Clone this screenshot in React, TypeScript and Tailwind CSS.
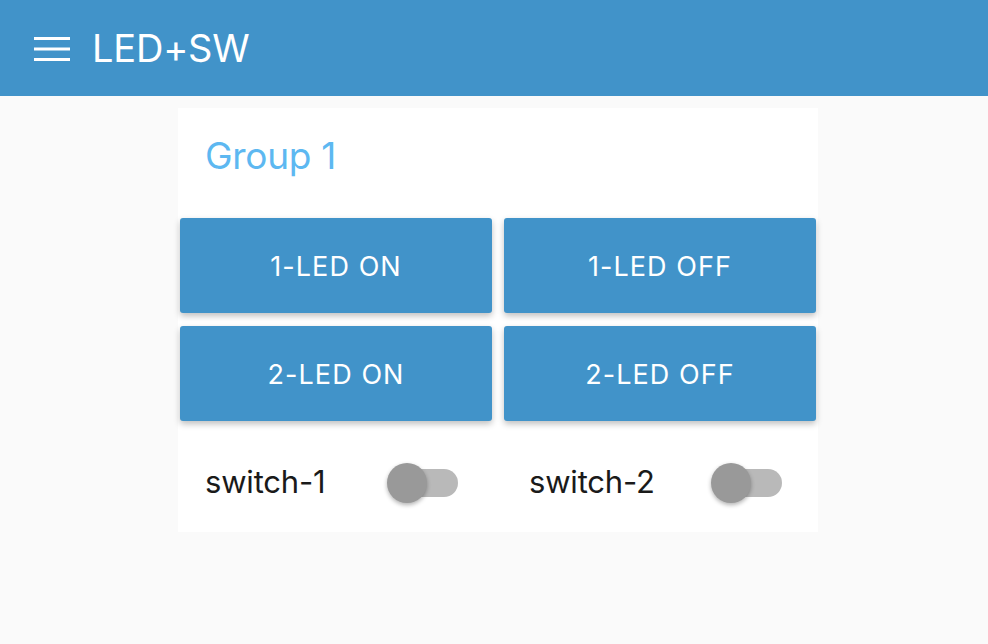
import React, { useState } from 'react'

// LED+SW control panel: header bar, one group card with LED buttons and switches

const buttons = ['1-LED ON', '1-LED OFF', '2-LED ON', '2-LED OFF']

const Toggle: React.FC<{ on: boolean; onClick: () => void }> = ({ on, onClick }) => (
  <button onClick={onClick} className="relative w-[71px] h-[40px] flex items-center justify-end">
    <span
      className={`block w-[68px] h-[28px] rounded-full ${on ? 'bg-[#9fcbe8]' : 'bg-[#b9b9b9]'}`}
    />
    <span
      className={`absolute top-0 w-[40px] h-[40px] rounded-full shadow-[0_2px_4px_rgba(0,0,0,0.3)] ${
        on ? 'left-[31px] bg-[#4192c9]' : 'left-0 bg-[#999999]'
      }`}
    />
  </button>
)

export default function App() {
  const [sw, setSw] = useState([false, false])

  return (
    <div className="min-h-[644px] bg-[#fafafa] font-['Inter',sans-serif]">
      <header className="h-[96px] bg-[#4193c9] flex items-center pl-[34px] gap-[22px] text-white">
        <svg width="36" height="24" viewBox="0 0 36 24" className="mt-[2px]">
          <rect x="0" y="0" width="36" height="3" fill="#fff" />
          <rect x="0" y="10.5" width="36" height="3" fill="#fff" />
          <rect x="0" y="21" width="36" height="3" fill="#fff" />
        </svg>
        <h1 className="text-[38px] font-normal tracking-[-0.2px]">LED+SW</h1>
      </header>

      <main className="w-[640px] ml-[178px] mt-[12px] bg-white">
        <div className="h-[108px] pl-[27px] flex items-center">
          <h2 className="text-[37px] text-[#5db8f1] -mt-[12px] tracking-[-0.3px]">Group 1</h2>
        </div>
        <div className="grid grid-cols-2 gap-x-[12px] gap-y-[13px] px-[2px] pt-[2px]">
          {buttons.map(b => (
            <button
              key={b}
              className="h-[95px] pt-[3px] rounded-[3px] bg-[#4193c9] text-white text-[27px] tracking-[0.04em] shadow-[0_3px_6px_rgba(0,0,0,0.25)]"
            >
              {b}
            </button>
          ))}
        </div>
        <div className="grid grid-cols-2 gap-x-[12px] px-[2px] h-[111px]">
          {['switch-1', 'switch-2'].map((s, i) => (
            <div key={s} className="flex items-center pl-[25px] pr-[34px] justify-between pt-[12px]">
              <span className="text-[31px] text-[#1a1a1a] tracking-[-0.2px]">{s}</span>
              <Toggle on={sw[i]} onClick={() => setSw(v => v.map((x, j) => (j === i ? !x : x)))} />
            </div>
          ))}
        </div>
      </main>
    </div>
  )
}
